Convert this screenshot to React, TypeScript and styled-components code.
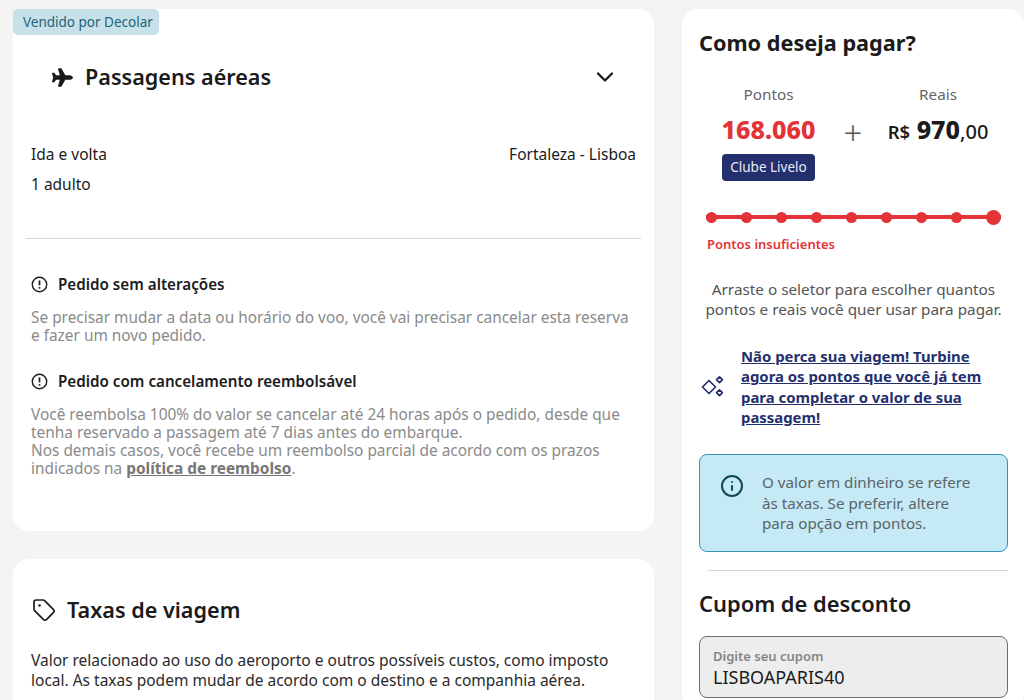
import React from 'react';
import styled, { createGlobalStyle } from 'styled-components';
import { ChevronDown, Tag, Info } from 'lucide-react';
import { FaPlane } from 'react-icons/fa';

const GlobalStyle = createGlobalStyle`
html, body {
  margin: 0;
  height: 700px;
  overflow: hidden;
  background: #f4f4f4;
  font-family: "Noto Sans", sans-serif;
  color: #1b1b1b;
}
`;

const Page = styled.div`
display: grid;
grid-template-columns: 641px 342px;
column-gap: 28px;
padding: 9px 0 0 13px;
height: 691px;
overflow: hidden;
`;

const Column = styled.div`
display: flex;
flex-direction: column;
gap: 28px;
`;

const Card = styled.section`
position: relative;
background: #fff;
border-radius: 16px;
`;

const SoldBy = styled.div`
position: absolute;
top: 0;
left: 0;
width: 146px;
height: 26px;
box-sizing: border-box;
padding-left: 10px;
background: #c8e0e9;
border-radius: 5px;
color: #1d6478;
font-size: 13.5px;
line-height: 26px;
`;

const FlightHead = styled.div`
display: flex;
align-items: center;
justify-content: space-between;
padding: 52px 35px 0 39px;
height: 32px;
`;

const HeadLeft = styled.div`
display: flex;
align-items: center;
gap: 12px;
`;

const CardTitle = styled.h2`
margin: 0;
font-size: 21.6px;
font-weight: 600;
line-height: 32px;
`;

const Summary = styled.div`
padding: 46px 18px 0 18px;
font-size: 15.5px;
line-height: 30px;
height: 99px;
`;

const SummaryRow = styled.div`
display: flex;
justify-content: space-between;
`;

const Divider = styled.hr`
margin: 0 13px;
border: 0;
border-top: 1px solid #d6d6d6;
`;

const Notes = styled.div`
display: flex;
flex-direction: column;
gap: 26px;
padding: 35px 18px 53px 18px;
`;

const Note = styled.div`
display: flex;
flex-direction: column;
gap: 15px;
`;

const NoteTitle = styled.div`
display: flex;
align-items: center;
gap: 10px;
font-size: 15.2px;
font-weight: 600;
line-height: 20px;
`;

const NoteBody = styled.p`
margin: 0;
font-size: 15.4px;
line-height: 18px;
color: #8a8a8a;
b {
  color: #777;
  font-weight: 700;
  text-decoration: underline;
}
`;

const FeesHead = styled.div`
display: flex;
align-items: center;
gap: 11px;
padding: 35px 18px 0 19px;
`;

const FeesBody = styled.p`
margin: 0;
padding: 24px 18px 40px 18px;
font-size: 15.5px;
line-height: 20px;
color: #2a2a2a;
`;

const PayCard = styled(Card)`
height: 700px;
padding: 18px 16px 0 17px;
box-sizing: border-box;
`;

const PayTitle = styled.h2`
margin: 0;
font-size: 21.7px;
font-weight: 700;
line-height: 32px;
`;

const Amounts = styled.div`
display: grid;
grid-template-columns: 139px 30px 1fr;
margin-top: 25px;
`;

const AmountColumn = styled.div`
display: flex;
flex-direction: column;
align-items: center;
`;

const AmountLabel = styled.div`
font-size: 15.3px;
line-height: 20px;
color: #666;
`;

const Points = styled.div`
margin-top: 10px;
font-size: 25px;
font-weight: 800;
line-height: 30px;
color: #e33336;
`;

const Money = styled.div`
margin-top: 10px;
font-size: 25px;
font-weight: 800;
line-height: 30px;
white-space: nowrap;
small {
  font-size: 18.5px;
  font-weight: 600;
}
span {
  font-size: 20px;
  font-weight: 500;
}
`;

const Plus = styled.div`
margin-top: 31px;
font-size: 33px;
line-height: 36px;
text-align: center;
color: #555;
font-weight: 300;
`;

const Club = styled.div`
margin-top: 10px;
width: 93px;
height: 27px;
background: #242f6e;
color: #e8eaf5;
border-radius: 4px;
font-size: 13.5px;
line-height: 27px;
text-align: center;
`;

const Slider = styled.div`
position: relative;
display: flex;
justify-content: space-between;
align-items: center;
margin: 28px 7px 0 7px;
height: 16px;
&::before {
  content: '';
  position: absolute;
  left: 0;
  right: 0;
  top: 6px;
  height: 4px;
  background: #e33336;
}
`;

const Dot = styled.span<{ $big?: boolean }>`
position: relative;
width: ${(p) => (p.$big ? 15 : 11)}px;
height: ${(p) => (p.$big ? 15 : 11)}px;
border-radius: 50%;
background: #e33336;
`;

const Warning = styled.div`
margin: 10px 0 0 8px;
font-size: 13px;
font-weight: 600;
line-height: 18px;
color: #e33336;
`;

const Hint = styled.p`
margin: 26px 0 0;
font-size: 15.3px;
line-height: 20px;
color: #555;
text-align: center;
`;

const Promo = styled.div`
display: flex;
align-items: center;
gap: 16px;
margin-top: 27px;
padding-left: 2px;
`;

const PromoLink = styled.a`
font-size: 14.9px;
font-weight: 700;
line-height: 20.3px;
color: #242f6e;
text-decoration: underline;
`;

const InfoBox = styled.div`
display: flex;
gap: 18px;
margin-top: 27px;
height: 98px;
box-sizing: border-box;
padding: 17px 20px 0 20px;
background: #c5e9f5;
border: 1px solid #3794b8;
border-radius: 8px;
color: #5b6468;
font-size: 15.2px;
line-height: 20.5px;
svg {
  flex: none;
  margin-top: 2px;
}
`;

const SideDivider = styled.hr`
margin: 18px 0 0 9px;
border: 0;
border-top: 1px solid #d6d6d6;
`;

const CouponTitle = styled.h2`
margin: 17px 0 0;
font-size: 21.9px;
font-weight: 600;
line-height: 32px;
`;

const CouponField = styled.div`
margin-top: 16px;
height: 62px;
box-sizing: border-box;
padding: 11px 13px 0;
background: #ededed;
border: 1px solid #6e6e6e;
border-radius: 8px;
`;

const CouponLabel = styled.div`
font-size: 13px;
font-weight: 600;
line-height: 17px;
color: #858585;
`;

const CouponValue = styled.div`
font-size: 18px;
line-height: 24px;
color: #1b1b1b;
`;

function AlertIcon() {
  return (
    <svg width="17" height="17" viewBox="0 0 16 16" fill="none" stroke="#1b1b1b" strokeWidth="1.3">
      <circle cx="8" cy="8" r="6.8" />
      <path d="M8 4.2v4.6" strokeWidth="1.6" />
      <path d="M8 10.4v1.5" strokeWidth="1.6" />
    </svg>
  );
}

function SparkIcon() {
  return (
    <svg width="24" height="24" viewBox="0 0 24 24" fill="none" stroke="#242f6e" strokeWidth="1.7" strokeLinejoin="round">
      <path d="M8 5.5l6.5 6.5-6.5 6.5L1.5 12z" />
      <path d="M18.5 1.8l2.9 2.9-2.9 2.9-2.9-2.9z" />
      <path d="M18.5 14.8l2.9 2.9-2.9 2.9-2.9-2.9z" />
    </svg>
  );
}

const notes = [
  {
    title: 'Pedido sem alterações',
    body: <>Se precisar mudar a data ou horário do voo, você vai precisar cancelar esta reserva<br />e fazer um novo pedido.</>,
  },
  {
    title: 'Pedido com cancelamento reembolsável',
    body: (
      <>
        Você reembolsa 100% do valor se cancelar até 24 horas após o pedido, desde que<br />
        tenha reservado a passagem até 7 dias antes do embarque.<br />
        Nos demais casos, você recebe um reembolso parcial de acordo com os prazos<br />
        indicados na <b>política de reembolso</b>.
      </>
    ),
  },
];

function App() {
  return (
    <>
      <GlobalStyle />
      <Page>
        <Column>
          <Card>
            <SoldBy>Vendido por Decolar</SoldBy>
            <FlightHead>
              <HeadLeft>
                <FaPlane size={21} color="#1b1b1b" />
                <CardTitle>Passagens aéreas</CardTitle>
              </HeadLeft>
              <ChevronDown size={28} strokeWidth={2} />
            </FlightHead>
            <Summary>
              <SummaryRow>
                <span>Ida e volta</span>
                <span>Fortaleza - Lisboa</span>
              </SummaryRow>
              <div>1 adulto</div>
            </Summary>
            <Divider />
            <Notes>
              {notes.map((note) => (
                <Note key={note.title}>
                  <NoteTitle>
                    <AlertIcon />
                    {note.title}
                  </NoteTitle>
                  <NoteBody>{note.body}</NoteBody>
                </Note>
              ))}
            </Notes>
          </Card>
          <Card>
            <FeesHead>
              <Tag size={24} strokeWidth={1.7} />
              <CardTitle>Taxas de viagem</CardTitle>
            </FeesHead>
            <FeesBody>
              Valor relacionado ao uso do aeroporto e outros possíveis custos, como imposto<br />
              local. As taxas podem mudar de acordo com o destino e a companhia aérea.
            </FeesBody>
          </Card>
        </Column>
        <PayCard>
          <PayTitle>Como deseja pagar?</PayTitle>
          <Amounts>
            <AmountColumn>
              <AmountLabel>Pontos</AmountLabel>
              <Points>168.060</Points>
              <Club>Clube Livelo</Club>
            </AmountColumn>
            <Plus>+</Plus>
            <AmountColumn>
              <AmountLabel>Reais</AmountLabel>
              <Money><small>R$</small> 970<span>,00</span></Money>
            </AmountColumn>
          </Amounts>
          <Slider>
            {Array.from({ length: 8 }).map((_, i) => <Dot key={i} />)}
            <Dot $big />
          </Slider>
          <Warning>Pontos insuficientes</Warning>
          <Hint>Arraste o seletor para escolher quantos<br />pontos e reais você quer usar para pagar.</Hint>
          <Promo>
            <SparkIcon />
            <PromoLink href="#">Não perca sua viagem! Turbine<br />agora os pontos que você já tem<br />para completar o valor de sua<br />passagem!</PromoLink>
          </Promo>
          <InfoBox>
            <Info size={24} color="#0d4a4f" strokeWidth={2} />
            <div>O valor em dinheiro se refere<br />às taxas. Se preferir, altere<br />para opção em pontos.</div>
          </InfoBox>
          <SideDivider />
          <CouponTitle>Cupom de desconto</CouponTitle>
          <CouponField>
            <CouponLabel>Digite seu cupom</CouponLabel>
            <CouponValue>LISBOAPARIS40</CouponValue>
          </CouponField>
        </PayCard>
      </Page>
    </>
  );
}

export default App;
